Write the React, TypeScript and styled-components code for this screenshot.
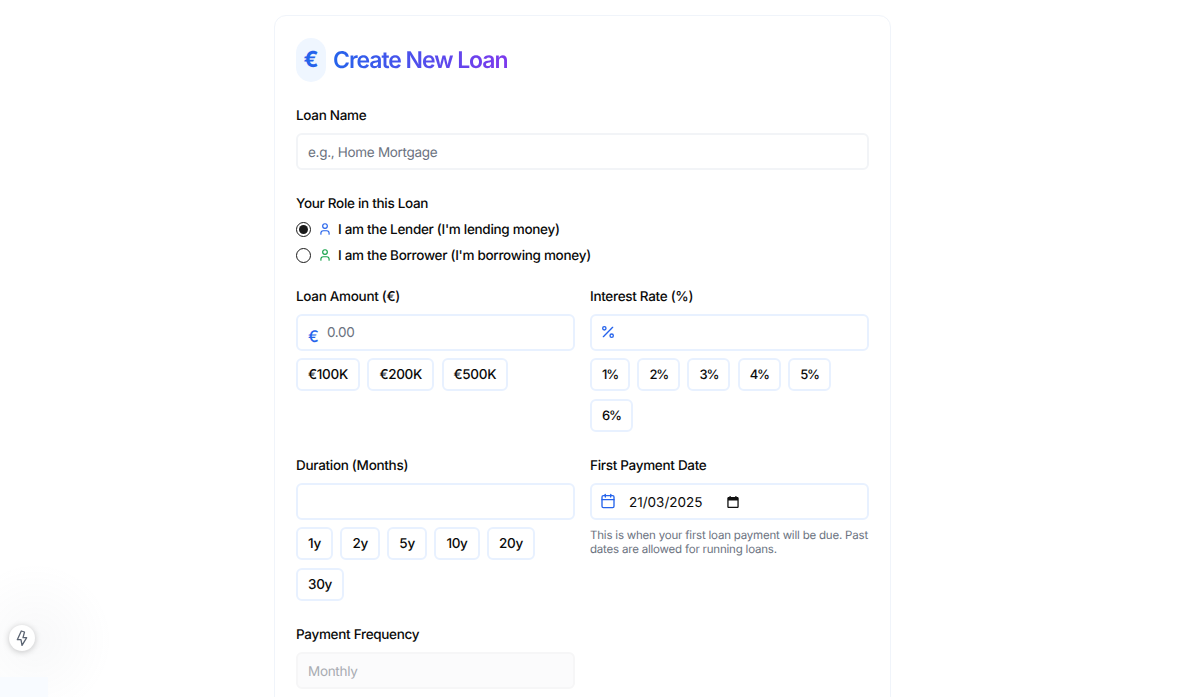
import React from 'react';
import styled, { createGlobalStyle } from 'styled-components';
import { Percent, User, Calendar } from 'lucide-react';

const GlobalStyle = createGlobalStyle`
  html, body {
    margin: 0;
    height: 100%;
    overflow: hidden;
    background: #fff;
  }
  body {
    font-family: Inter, "Liberation Sans", sans-serif;
    color: #0a0a0a;
    text-rendering: geometricPrecision;
  }
  * { box-sizing: border-box; }
  input, button { text-rendering: geometricPrecision; }
`;

const Page = styled.div`
  display: flex;
  justify-content: center;
  padding: 15px 35px 0 0;
`;

const Card = styled.div`
  width: 617px;
  padding: 22px 21px 40px;
  background: #fff;
  border: 1px solid #f0f4fa;
  border-radius: 12px;
  display: flex;
  flex-direction: column;
`;

const Header = styled.div`
  display: flex;
  align-items: center;
  gap: 7px;
  margin-bottom: 24px;
`;

const IconPill = styled.div`
  width: 30px;
  height: 44px;
  border-radius: 15px;
  background: #eff6ff;
  color: #2563eb;
  font-size: 22px;
  font-weight: 700;
  display: flex;
  align-items: center;
  justify-content: center;
`;

const Title = styled.h1`
  margin: 0;
  font-size: 23px;
  line-height: 32px;
  font-weight: 600;
  letter-spacing: -1.05px;
  background: linear-gradient(90deg, #2563eb, #7c3aed);
  background-clip: text;
  -webkit-background-clip: text;
  color: transparent;
`;

const Label = styled.label`
  display: block;
  font-size: 13.5px;
  letter-spacing: -0.3px;
  line-height: 20px;
  font-weight: 500;
  margin-bottom: 7px;
`;

const Field = styled.div`
  margin-bottom: 24px;
`;

const InputWrap = styled.div`
  position: relative;
`;

const TextInput = styled.input<{ $tint?: boolean; $indent?: number }>`
  display: block;
  width: 100%;
  height: 37px;
  padding: ${props => (props.$tint ? 0 : 2)}px 12px 0 ${props => props.$indent || 10}px;
  background: #fff;
  border: 2px solid ${props => (props.$tint ? '#e8f1ff' : '#f2f4f7')};
  border-radius: 6px;
  font-family: inherit;
  font-size: 13.5px;
  letter-spacing: -0.3px;
  color: #0a0a0a;
  outline: none;

  &::placeholder {
    color: #6b7280;
    opacity: 1;
  }

  &:disabled {
    background: #fbfbfc;
    border-color: #f6f6f7;
  }
  &:disabled::placeholder {
    color: #a8abb2;
  }
`;

const EuroMark = styled.span`
  position: absolute;
  left: 12px;
  top: 12px;
  font-size: 16px;
  line-height: 20px;
  font-weight: 500;
  color: #2563eb;
`;

const IconSlot = styled.span`
  position: absolute;
  left: 10px;
  top: 10px;
  display: flex;
  color: #2563eb;
`;

const RoleGroup = styled.div`
  display: flex;
  flex-direction: column;
  gap: 6px;
  margin: -2px 0 -2px;
`;

const RoleRow = styled.div`
  display: flex;
  align-items: center;
  height: 20px;
  font-size: 13.5px;
  letter-spacing: -0.3px;
  font-weight: 500;
  color: #0a0a0a;
`;

const RoleText = styled.span`
  padding-top: 1px;
`;

const Radio = styled.span<{ $checked?: boolean }>`
  width: 15px;
  height: 15px;
  border-radius: 50%;
  border: 1px solid #1a1a1a;
  margin-right: 7px;
  display: flex;
  align-items: center;
  justify-content: center;

  &::after {
    content: '';
    width: 9px;
    height: 9px;
    border-radius: 50%;
    background: ${props => (props.$checked ? '#1a1a1a' : 'transparent')};
  }
`;

const RoleIcon = styled.span<{ $color: string }>`
  display: flex;
  color: ${props => props.$color};
  margin-right: 6px;
`;

const Columns = styled.div`
  display: grid;
  grid-template-columns: 279px 279px;
  column-gap: 15px;
`;

const Chips = styled.div`
  display: flex;
  flex-wrap: wrap;
  gap: 8px 7.5px;
  margin-top: 7px;
`;

const Chip = styled.button<{ $tight?: boolean }>`
  height: 33px;
  padding: 0 10px;
  background: #fff;
  border: 2px solid #e8f1ff;
  border-radius: 6px;
  font-family: inherit;
  font-size: ${props => (props.$tight ? '13px' : '13.5px')};
  letter-spacing: ${props => (props.$tight ? '-1.2px' : '-0.3px')};
  font-weight: 500;
  color: #0a0a0a;
`;

const Hint = styled.p`
  margin: 8px 0 0;
  font-size: 11.5px;
  letter-spacing: -0.2px;
  line-height: 14px;
  color: #6b7280;
`;

const DateValue = styled.div`
  height: 37px;
  display: flex;
  align-items: center;
  padding: 2px 0 0 37px;
  background: #fff;
  border: 2px solid #e8f1ff;
  border-radius: 6px;
  font-size: 13.5px;
`;

const PickerIcon = styled.svg`
  margin: -2px 0 0 23px;
`;

const Glow = styled.div`
  position: fixed;
  left: -45px;
  top: 560px;
  width: 160px;
  height: 160px;
  border-radius: 50%;
  background: radial-gradient(circle, rgba(120, 130, 150, 0.05), rgba(120, 130, 150, 0) 68%);
  pointer-events: none;
`;

const BlueFade = styled.div`
  position: fixed;
  left: 0;
  bottom: 0;
  width: 48px;
  height: 20px;
  background: #f8fbff;
`;

const DevBadge = styled.div`
  position: fixed;
  left: 9px;
  top: 625px;
  width: 26px;
  height: 26px;
  border-radius: 50%;
  background: #fff;
  box-shadow: 0 1px 6px rgba(0, 0, 0, 0.22);
  display: flex;
  align-items: center;
  justify-content: center;
`;

const chipsAmount = ['€100K', '€200K', '€500K'];
const chipsRate = ['1%', '2%', '3%', '4%', '5%', '6%'];
const chipsYears = ['1y', '2y', '5y', '10y', '20y', '30y'];

export default function App() {
  return (
    <>
      <GlobalStyle />
      <Page>
        <Card>
          <Header>
            <IconPill>€</IconPill>
            <Title>Create New Loan</Title>
          </Header>

          <Field>
            <Label>Loan Name</Label>
            <TextInput placeholder="e.g., Home Mortgage" />
          </Field>

          <Field>
            <Label>Your Role in this Loan</Label>
            <RoleGroup>
              <RoleRow>
                <Radio $checked />
                <RoleIcon $color="#2563eb"><User size={14} /></RoleIcon>
                <RoleText>I am the Lender (I'm lending money)</RoleText>
              </RoleRow>
              <RoleRow>
                <Radio />
                <RoleIcon $color="#16a34a"><User size={14} /></RoleIcon>
                <RoleText>I am the Borrower (I'm borrowing money)</RoleText>
              </RoleRow>
            </RoleGroup>
          </Field>

          <Columns>
            <Field>
              <Label>Loan Amount (€)</Label>
              <InputWrap>
                <EuroMark>€</EuroMark>
                <TextInput $tint $indent={29} placeholder="0.00" />
              </InputWrap>
              <Chips>
                {chipsAmount.map(c => <Chip key={c}>{c}</Chip>)}
              </Chips>
            </Field>

            <Field>
              <Label>Interest Rate (%)</Label>
              <InputWrap>
                <IconSlot><Percent size={16} /></IconSlot>
                <TextInput $tint $indent={36} />
              </InputWrap>
              <Chips>
                {chipsRate.map(c => <Chip key={c} $tight>{c}</Chip>)}
              </Chips>
            </Field>

            <Field>
              <Label>Duration (Months)</Label>
              <TextInput $tint />
              <Chips>
                {chipsYears.map(c => <Chip key={c}>{c}</Chip>)}
              </Chips>
            </Field>

            <Field>
              <Label>First Payment Date</Label>
              <InputWrap>
                <IconSlot><Calendar size={16} /></IconSlot>
                <DateValue>
                  21/03/2025
                  <PickerIcon width="14" height="14" viewBox="0 0 14 14">
                    <path d="M3.5 1h1.2v1h4.6V1h1.2v1h.9c.7 0 1.3.6 1.3 1.3v8.4c0 .7-.6 1.3-1.3 1.3H2.600c-.7 0-1.300-.6-1.300-1.300V3.300C1.300 2.600 1.900 2 2.600 2h.9V1zM2.600 5.500v6.200h8.800V5.500H2.600z" fill="#111" />
                  </PickerIcon>
                </DateValue>
              </InputWrap>
              <Hint>This is when your first loan payment will be due. Past dates are allowed for running loans.</Hint>
            </Field>

            <Field>
              <Label>Payment Frequency</Label>
              <TextInput disabled placeholder="Monthly" />
            </Field>
          </Columns>
        </Card>
      </Page>
      <Glow />
      <BlueFade />
      <DevBadge>
        <svg width="18" height="18" viewBox="0 0 18 18" fill="none">
          <path d="M8.300 2L4.300 10.700H8L9 16.300L13.700 8.700H10L11.500 3L8.300 2Z" stroke="#5b6472" strokeWidth="1.300" strokeLinejoin="round" />
        </svg>
      </DevBadge>
    </>
  );
}
